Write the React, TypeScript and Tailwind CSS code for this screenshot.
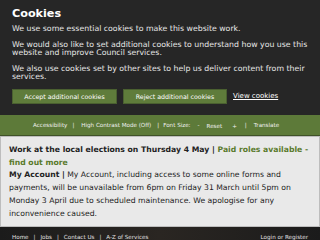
export default function App() {
  return (
    <div className="w-[320px] h-[240px] overflow-hidden bg-[#1c1c1c] font-['DejaVu_Sans',sans-serif]">
      {/* Cookie banner */}
      <div className="bg-[#262626] px-3 pt-[6px] pb-[11px] text-white">
        <h1 className="text-[11.2px] font-bold leading-[16px]">Cookies</h1>
        <p className="mt-[3px] text-[7.8px] leading-[8.5px] text-[#e6e6e6]">
          We use some essential cookies to make this website work.
        </p>
        <p className="mt-[7px] text-[7.8px] leading-[8.5px] text-[#e6e6e6]">
          We would also like to set additional cookies to understand how you use this website and improve Council services.
        </p>
        <p className="mt-[7px] text-[7.8px] leading-[8.5px] text-[#e6e6e6]">
          We also use cookies set by other sites to help us deliver content from their services.
        </p>
        <div className="mt-[7.5px] flex items-center gap-[6px]">
          <button className="h-[15px] w-[105px] border border-[#4a6030] bg-[#5f7c3b] text-[6.3px] text-white">
            Accept additional cookies
          </button>
          <button className="h-[15px] w-[104px] border border-[#4a6030] bg-[#5f7c3b] text-[6.3px] text-white">
            Reject additional cookies
          </button>
          <a className="text-[7px] text-white underline">View cookies</a>
        </div>
      </div>

      {/* Toolbar */}
      <div className="flex h-[21px] items-center border-b border-[#3f5227] bg-[#5d7a39] pl-[33px] text-[5.6px] text-[#f0f0f0]">
        <span>Accessibility</span>
        <span className="ml-[5px]">|</span>
        <span className="ml-[7px]">High Contrast Mode (Off)</span>
        <span className="ml-[6px]">|</span>
        <span className="ml-[4px]">Font Size:</span>
        <span className="ml-[7px]">-</span>
        <span className="ml-[7px] translate-y-[1px]">Reset</span>
        <span className="ml-[10px] translate-y-[1px]">+</span>
        <span className="ml-[8px]">|</span>
        <span className="ml-[7px]">Translate</span>
      </div>

      {/* Notice */}
      <div className="border border-[#bdbdbd] bg-[#e9e9e9] px-2 pt-[7px] pb-[6px] text-[7.7px] leading-[12.7px] text-[#222]">
        <p className="font-bold">
          Work at the local elections on Thursday 4 May |{" "}
          <a className="text-[#5a7a2c]">Paid roles available - find out more</a>
        </p>
        <p>
          <span className="font-bold">My Account |</span> My Account, including access to some online forms and payments, will be unavailable from 6pm on Friday 31 March until 5pm on Monday 3 April due to scheduled maintenance. We apologise for any inconvenience caused.
        </p>
      </div>

      {/* Footer nav */}
      <div className="flex h-[30px] items-start justify-between bg-gradient-to-r from-[#1b1b1b] via-[#2a2622] to-[#1b1b1b] px-3 pt-[6px] text-[5.6px] text-[#e0e0e0]">
        <div className="flex gap-[5px]">
          <span>Home</span>
          <span>|</span>
          <span>Jobs</span>
          <span>|</span>
          <span>Contact Us</span>
          <span>|</span>
          <span>A-Z of Services</span>
        </div>
        <span>Login or Register</span>
      </div>
    </div>
  )
}
